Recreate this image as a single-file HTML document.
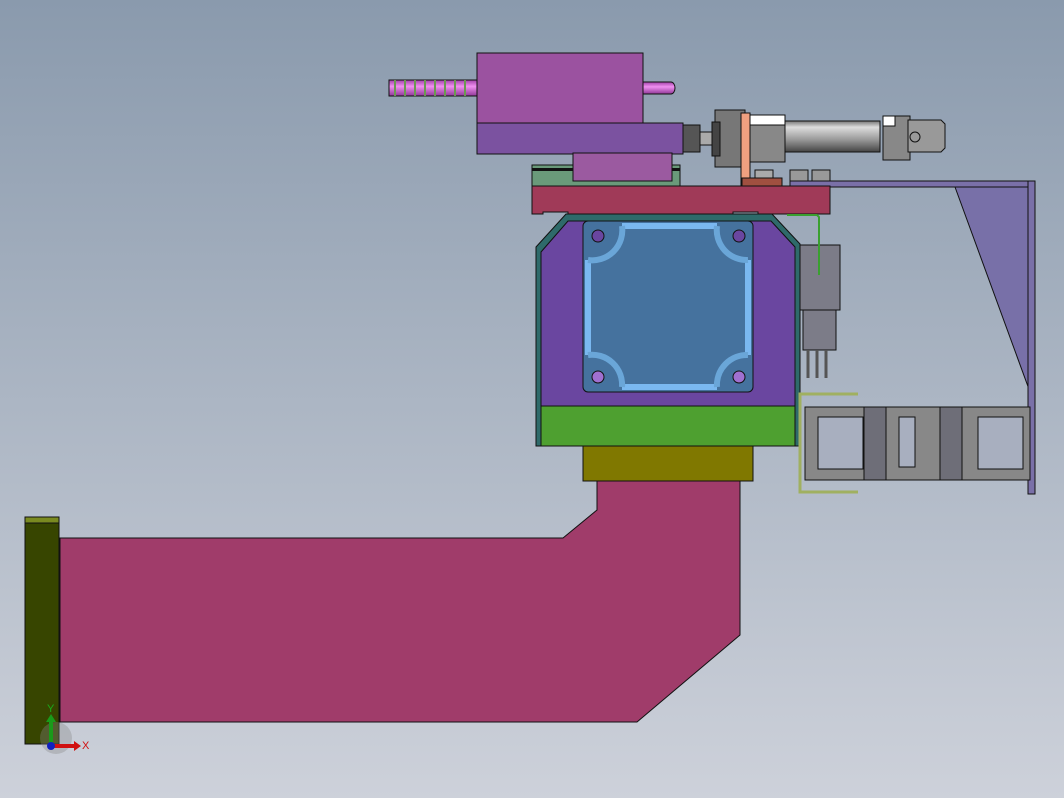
<!DOCTYPE html>
<html><head><meta charset="utf-8"><style>html,body{margin:0;padding:0;overflow:hidden}svg{display:block}</style></head><body>
<svg width="1064" height="798" viewBox="0 0 1064 798" xmlns="http://www.w3.org/2000/svg" font-family="Liberation Sans, sans-serif">
<defs>
<linearGradient id="bg" x1="0" y1="0" x2="0" y2="1"><stop offset="0" stop-color="#8a9aad"/><stop offset="1" stop-color="#cdd1da"/></linearGradient>
<linearGradient id="cyl" x1="0" y1="0" x2="0" y2="1"><stop offset="0" stop-color="#777"/><stop offset="0.2" stop-color="#ddd"/><stop offset="0.6" stop-color="#999"/><stop offset="1" stop-color="#444"/></linearGradient>
<linearGradient id="rod" x1="0" y1="0" x2="0" y2="1"><stop offset="0" stop-color="#a040a8"/><stop offset="0.4" stop-color="#f090f0"/><stop offset="1" stop-color="#903898"/></linearGradient>
</defs>
<rect width="1064" height="798" fill="url(#bg)"/>
<g stroke="#111" stroke-width="1">
<rect x="389" y="80" width="89" height="16" fill="url(#rod)"/>
<path d="M395 80v16M405 80v16M415 80v16M425 80v16M435 80v16M445 80v16M455 80v16M465 80v16" stroke="#6a9a50" stroke-width="2"/>
<path d="M643 82h28a4 6 0 0 1 0 12h-28z" fill="url(#rod)"/>
<rect x="477" y="53" width="166" height="70" fill="#9b52a0"/>
<rect x="477" y="123" width="206" height="31" fill="#7b52a0"/>
<rect x="532" y="165" width="148" height="21" fill="#6a9a7a"/>
<rect x="532" y="168" width="148" height="3" fill="#111" stroke="none"/>
<rect x="573" y="153" width="99" height="28" fill="#9b5aa0"/>
<rect x="683" y="125" width="17" height="27" fill="#555"/>
<rect x="700" y="132" width="15" height="13" fill="#aaa"/>
<rect x="715" y="110" width="30" height="57" fill="#777"/>
<rect x="712" y="122" width="8" height="34" fill="#444"/>
<rect x="741" y="113" width="9" height="72" fill="#f0a080"/>
<rect x="750" y="115" width="35" height="47" fill="#888"/>
<rect x="750" y="115" width="35" height="10" fill="#fff"/>
<rect x="785" y="121" width="95" height="31" fill="url(#cyl)"/>
<rect x="883" y="116" width="27" height="44" fill="#888"/>
<rect x="883" y="116" width="12" height="10" fill="#fff"/>
<path d="M908 120h33l4 4v24l-4 4h-33z" fill="#999"/>
<circle cx="915" cy="137" r="5" fill="#999"/>
<rect x="790" y="170" width="18" height="12" fill="#999"/>
<rect x="812" y="170" width="18" height="12" fill="#999"/>
<rect x="755" y="170" width="18" height="10" fill="#aaa"/>
<rect x="742" y="178" width="40" height="9" fill="#a05040"/>
<path d="M955 187 L1030 392 L1030 187 Z" fill="#7870a8"/>
<rect x="790" y="181" width="245" height="6" fill="#7a70a8"/>
<rect x="1028" y="181" width="7" height="313" fill="#7a70a8"/>
<path d="M532 186h298v28h-72v-2h-25v2h-165v-2h-25v2h-11z" fill="#a03a58"/>
<path d="M536 247 L566 214 L772 214 L800 244 L800 446 L536 446 Z" fill="#2e6a6a"/>
<path d="M541 252 L568 221 L771 221 L795 247 L795 406 L541 406 Z" fill="#6a46a0"/>
<rect x="541" y="406" width="254" height="40" fill="#4ea030"/>
<rect x="583" y="221" width="170" height="171" rx="5" fill="#45729e"/>
<path d="M622 226h95M622 387h95M588 260v95M748 260v95" stroke="#7ab8f0" stroke-width="6" fill="none"/>
<path d="M588 260a30 30 0 0 0 34 -34M717 226a30 30 0 0 0 31 34M588 355a30 30 0 0 1 34 32M717 387a30 30 0 0 1 31 -32" stroke="#6aa6d8" stroke-width="6" fill="none"/>
<circle cx="598" cy="236" r="6" fill="#6a46a0"/><circle cx="739" cy="236" r="6" fill="#6a46a0"/>
<circle cx="598" cy="377" r="6" fill="#a070d0"/><circle cx="739" cy="377" r="6" fill="#a070d0"/>
<rect x="583" y="446" width="170" height="35" fill="#807800"/>
<rect x="800" y="245" width="40" height="65" fill="#7c7c88"/>
<rect x="803" y="310" width="33" height="40" fill="#7c7c88"/>
<path d="M808 350v28M817 350v28M826 350v28" stroke="#555" stroke-width="3"/>
<path d="M787 215h30l2 2v58" stroke="#3aa030" stroke-width="2" fill="none"/>
<rect x="805" y="407" width="225" height="73" fill="#888"/>
<rect x="818" y="417" width="45" height="52" fill="#a8afbf"/>
<rect x="899" y="417" width="16" height="50" fill="#a8afbf"/>
<rect x="978" y="417" width="45" height="52" fill="#a8afbf"/>
<rect x="864" y="407" width="22" height="73" fill="#6e6e78"/>
<rect x="940" y="407" width="22" height="73" fill="#6e6e78"/>
<path d="M858 394h-58v98h58" stroke="#a0b060" stroke-width="3" fill="none"/>
<path d="M597 481 L740 481 L740 635 L637 722 L60 722 L60 538 L563 538 L597 510 Z" fill="#a03c6a"/>
<rect x="25" y="517" width="34" height="227" fill="#374500"/>
<rect x="25" y="517" width="34" height="6" fill="#7a8a20"/>
</g>
<circle cx="56" cy="738" r="16" fill="#888" opacity="0.35"/>
<path d="M51 744v-24" stroke="#1a9a1a" stroke-width="4"/>
<path d="M46 722l5-8 5 8z" fill="#1a9a1a"/>
<path d="M52 746h24" stroke="#d01010" stroke-width="4"/>
<path d="M74 741l7 5-7 5z" fill="#d01010"/>
<circle cx="51" cy="746" r="4" fill="#1020c0"/>
<text x="47" y="712" font-size="11" fill="#1aaa1a">Y</text>
<text x="82" y="749" font-size="11" fill="#d01010">X</text>
</svg>
</body></html>
